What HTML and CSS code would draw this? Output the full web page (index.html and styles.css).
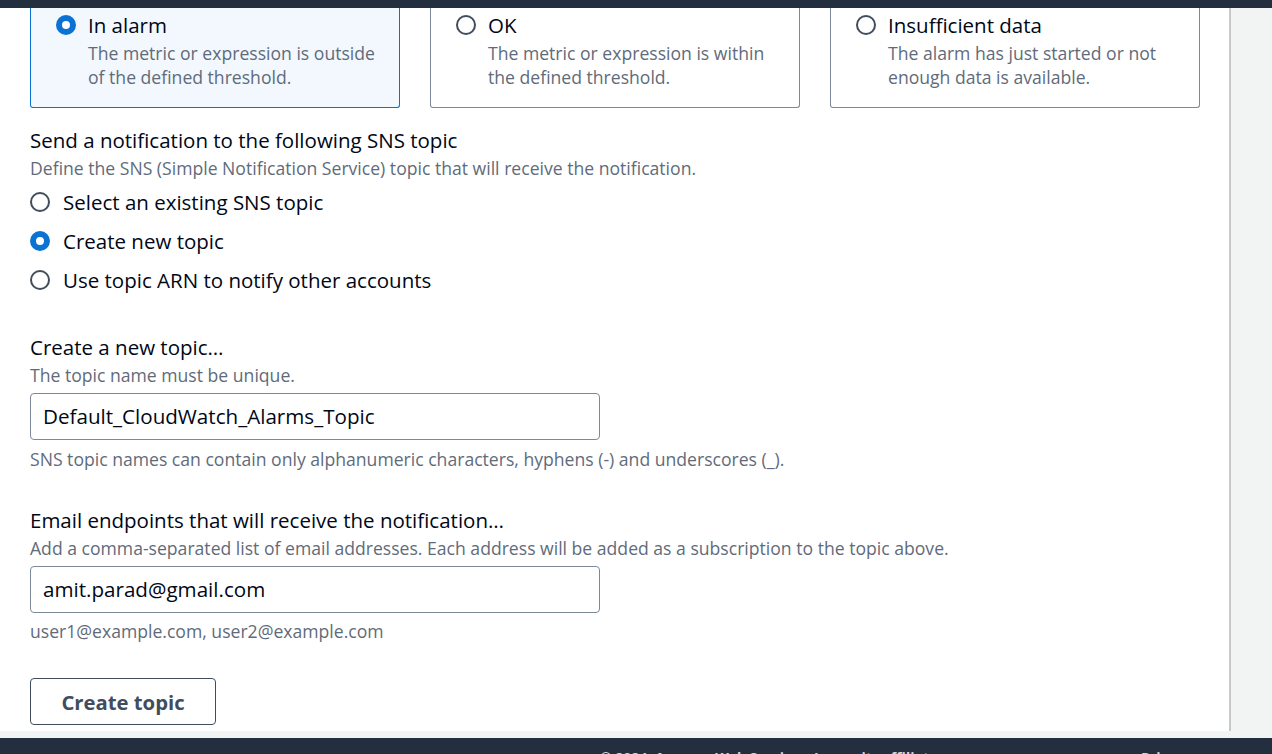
FILE: index.html
```html
<!DOCTYPE html>
<html lang="en">
<head>
<meta charset="utf-8">
<title>Create alarm - notification</title>
<link rel="stylesheet" href="styles.css">
</head>
<body>
<div class="topbar"></div>
<div class="layout">
  <main class="content">
    <div class="tiles">
      <div class="tile tile-selected">
        <div class="tile-head"><span class="radio radio-on"></span><span class="tile-label">In alarm</span></div>
        <div class="tile-desc">The metric or expression is outside of the defined threshold.</div>
      </div>
      <div class="tile">
        <div class="tile-head"><span class="radio"></span><span class="tile-label">OK</span></div>
        <div class="tile-desc">The metric or expression is within the defined threshold.</div>
      </div>
      <div class="tile">
        <div class="tile-head"><span class="radio"></span><span class="tile-label">Insufficient data</span></div>
        <div class="tile-desc">The alarm has just started or not enough data is available.</div>
      </div>
    </div>

    <section class="field field-sns">
      <div class="field-label">Send a notification to the following SNS topic</div>
      <div class="field-desc">Define the SNS (Simple Notification Service) topic that will receive the notification.</div>
      <div class="radio-group">
        <div class="radio-row"><span class="radio"></span><span class="radio-label">Select an existing SNS topic</span></div>
        <div class="radio-row"><span class="radio radio-on"></span><span class="radio-label">Create new topic</span></div>
        <div class="radio-row"><span class="radio"></span><span class="radio-label">Use topic ARN to notify other accounts</span></div>
      </div>
    </section>

    <section class="field field-topic">
      <div class="field-label">Create a new topic…</div>
      <div class="field-desc">The topic name must be unique.</div>
      <div class="input">Default_CloudWatch_Alarms_Topic</div>
      <div class="field-hint">SNS topic names can contain only alphanumeric characters, hyphens (-) and underscores (_).</div>
    </section>

    <section class="field field-email">
      <div class="field-label">Email endpoints that will receive the notification…</div>
      <div class="field-desc">Add a comma-separated list of email addresses. Each address will be added as a subscription to the topic above.</div>
      <div class="input">amit.parad@gmail.com</div>
      <div class="field-hint">user1@example.com, user2@example.com</div>
    </section>

    <button class="btn" type="button">Create topic</button>
  </main>
  <aside class="side"></aside>
</div>
<div class="bottom-strip"></div>
<footer class="footer">
  <span class="footer-text">© 2024, Amazon Web Services, Inc. or its affiliates.</span>
  <span class="footer-link">Privacy</span>
</footer>
</body>
</html>
```

FILE: styles.css
```css
* { box-sizing: border-box; }
html, body { margin: 0; padding: 0; height: 100%; overflow: hidden; }
body {
  font-family: "Open Sans", "Noto Sans", "Liberation Sans", sans-serif;
  color: #000716;
  background: #f2f3f3;
}
.topbar { height: 8px; background: #232f3e; }
.layout { display: flex; height: 723px; }
.content {
  width: 1231px;
  background: #ffffff;
  border-right: 2px solid #c6c9cc;
  padding: 0 30px 0 30px;
  display: flex;
  flex-direction: column;
  align-items: flex-start;
}
.side { flex: 1; background: #f2f3f3; }
.bottom-strip { height: 7px; background: #f2f3f3; }
.footer {
  height: 16px;
  background: #232f3e;
  display: flex;
  align-items: flex-start;
  padding-left: 600px;
  overflow: hidden;
}
.footer-text, .footer-link {
  color: #d1d5db;
  font-size: 14px;
  line-height: 16px;
  margin-top: 12px;
  font-weight: 700;
  white-space: nowrap;
}
.footer-link { margin-left: auto; margin-right: 80px; }

.tiles {
  display: grid;
  grid-template-columns: 370px 370px 370px;
  column-gap: 30px;
  width: 1170px;
}
.tile {
  border: 1px solid #7d8998;
  border-top: 0;
  border-radius: 0 0 3px 3px;
  height: 100px;
  padding: 3px 16px 0 25px;
  background: #ffffff;
}
.tile-selected { border-color: #0972d3; background: #f2f8fd; }
.tile-head { display: flex; align-items: center; height: 28px; }
.tile-label { font-size: 20.5px; line-height: 28px; margin-left: 12px; }
.tile-desc {
  margin-top: 2px;
  padding-left: 32px;
  font-size: 17.6px;
  line-height: 24px;
  color: #5f6b7a;
}

.radio {
  width: 20px;
  height: 20px;
  border-radius: 50%;
  border: 2px solid #414d5c;
  background: #ffffff;
  flex: none;
}
.radio-on { border: 6px solid #0972d3; }

.field { display: flex; flex-direction: column; align-items: flex-start; }
.field-label { font-size: 20.5px; line-height: 28px; }
.field-desc { font-size: 17.6px; line-height: 24px; color: #5f6b7a; margin-top: 2px; white-space: nowrap; }
.field-hint { font-size: 17.6px; line-height: 24px; color: #5f6b7a; white-space: nowrap; }
.field-sns { margin-top: 18px; }
.field-topic { margin-top: 41px; }
.field-email { margin-top: 35px; }

.radio-group { display: flex; flex-direction: column; gap: 15px; margin-top: 10px; }
.radio-row { display: flex; align-items: center; height: 24px; }
.radio-label { font-size: 20.5px; line-height: 24px; margin-left: 13px; }

.input {
  width: 570px;
  height: 47px;
  border: 1px solid #7d8998;
  border-radius: 4px;
  padding: 0 12px;
  font-size: 20.6px;
  line-height: 45px;
  margin-top: 6px;
  color: #000716;
}
.field-topic .field-hint { margin-top: 7px; }
.field-email .field-hint { margin-top: 6px; }

.btn {
  margin-top: 35px;
  width: 186px;
  height: 47px;
  border: 1px solid #414d5c;
  border-radius: 4px;
  background: #ffffff;
  font-family: inherit;
  font-size: 20.3px;
  font-weight: 700;
  color: #414d5c;
  padding: 0;
}
```
